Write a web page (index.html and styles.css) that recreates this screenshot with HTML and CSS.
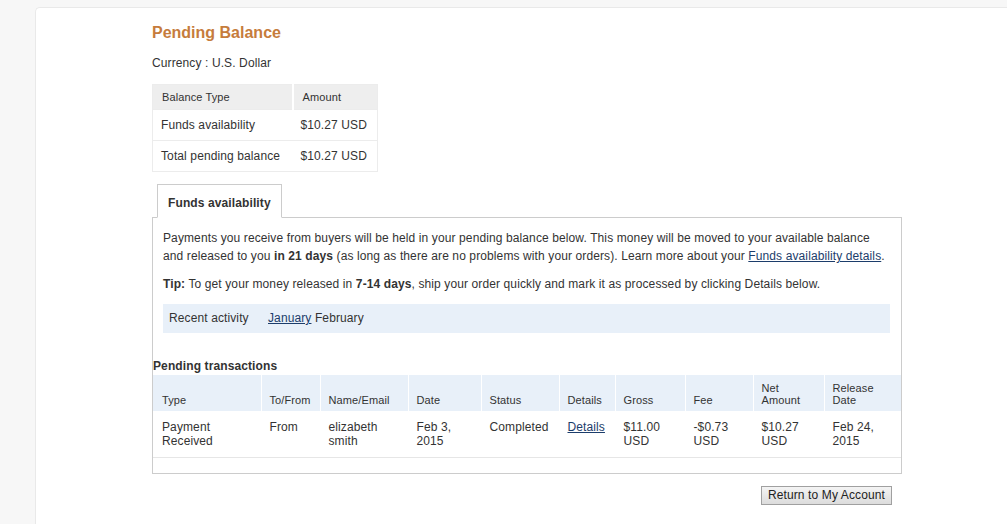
FILE: index.html
```html
<!DOCTYPE html>
<html>
<head>
<meta charset="utf-8">
<link rel="stylesheet" href="styles.css">
</head>
<body>
<div class="card">
  <div class="content">
    <h1 class="title">Pending Balance</h1>
    <p class="currency">Currency : U.S. Dollar</p>
    <table class="balance">
      <thead>
        <tr><th class="bt-type">Balance Type</th><th class="bt-amt">Amount</th></tr>
      </thead>
      <tbody>
        <tr><td>Funds availability</td><td>$10.27 USD</td></tr>
        <tr><td>Total pending balance</td><td>$10.27 USD</td></tr>
      </tbody>
    </table>
    <div class="tabs">
      <div class="tab">Funds availability</div>
    </div>
    <div class="panel">
      <div class="panel-inner">
        <p class="para">Payments you receive from buyers will be held in your pending balance below. This money will be moved to your available balance and released to you <b>in 21 days</b> (as long as there are no problems with your orders). Learn more about your <a href="#" class="link">Funds availability details</a>.</p>
        <p class="para"><b>Tip:</b> To get your money released in <b>7-14 days</b>, ship your order quickly and mark it as processed by clicking Details below.</p>
        <div class="recent"><span class="recent-label">Recent activity</span><a href="#" class="link">January</a> February</div>
      </div>
      <div class="pending-title">Pending transactions</div>
      <table class="tx">
        <colgroup>
          <col class="c1"><col class="c2"><col class="c3"><col class="c4"><col class="c5">
          <col class="c6"><col class="c7"><col class="c8"><col class="c9"><col class="c10">
        </colgroup>
        <thead>
          <tr>
            <th>Type</th><th>To/From</th><th>Name/Email</th><th>Date</th><th>Status</th>
            <th>Details</th><th>Gross</th><th>Fee</th><th>Net<br>Amount</th><th>Release<br>Date</th>
          </tr>
        </thead>
        <tbody>
          <tr>
            <td>Payment<br>Received</td><td>From</td><td>elizabeth<br>smith</td><td>Feb 3,<br>2015</td><td>Completed</td>
            <td><a href="#" class="link">Details</a></td><td>$11.00<br>USD</td><td>-$0.73<br>USD</td><td>$10.27<br>USD</td><td>Feb 24,<br>2015</td>
          </tr>
        </tbody>
      </table>
    </div>
    <div class="actions">
      <button class="btn">Return to My Account</button>
    </div>
  </div>
</div>
</body>
</html>
```
FILE: styles.css
```css
html, body {
  margin: 0;
  padding: 0;
  background: #f7f7f7;
  font-family: "Liberation Sans", Arial, sans-serif;
  color: #333333;
  font-size: 12px;
  letter-spacing: 0.11px;
}
body {
  padding: 7px 0 0 35px;
  overflow: hidden;
  height: 524px;
  box-sizing: border-box;
}
.card {
  background: #ffffff;
  border: 1px solid #e9e9e9;
  border-right: none;
  border-radius: 5px 0 0 0;
  padding: 14px 0 20px 116px;
  min-height: 600px;
}
.content {
  width: 750px;
}
.title {
  margin: 0;
  font-size: 16px;
  line-height: 22px;
  font-weight: bold;
  color: #c67c3c;
  letter-spacing: 0;
}
.currency {
  margin: 11px 0 0 0;
  line-height: 16px;
}
.balance {
  margin-top: 13px;
  border-collapse: collapse;
  border: 1px solid #ececec;
}
.balance th {
  background: #eeeeee;
  font-weight: normal;
  font-size: 11px;
  text-align: left;
  height: 25px;
  padding: 0 9px;
  box-sizing: border-box;
}
.balance th.bt-type {
  border-right: 2px solid #ffffff;
  width: 140px;
}
.balance td {
  height: 30px;
  padding: 0 10px 0 8px;
  border-top: 1px solid #ececec;
  font-size: 12px;
}
.tabs {
  display: flex;
  margin-top: 12px;
  padding-left: 5px;
}
.tab {
  position: relative;
  z-index: 1;
  margin-bottom: -1px;
  background: #ffffff;
  border: 1px solid #cccccc;
  border-bottom: 1px solid #ffffff;
  padding: 0 10px;
  height: 32px;
  line-height: 36px;
  font-weight: bold;
  color: #333333;
}
.panel {
  border: 1px solid #cccccc;
  padding-bottom: 15px;
}
.panel-inner {
  padding: 11px 11px 0 10px;
}
.para {
  margin: 0 0 10px 0;
  line-height: 18px;
}
.link {
  color: #1c3d6b;
  text-decoration: underline;
}
.recent {
  margin-top: 11px;
  background: #e8f0f9;
  height: 29px;
  line-height: 29px;
  padding-left: 6px;
}
.recent-label {
  display: inline-block;
  width: 99px;
}
.pending-title {
  margin-top: 26px;
  font-weight: bold;
  line-height: 14px;
  padding-left: 0;
}
.tx {
  margin-top: 2px;
  width: 100%;
  border-collapse: collapse;
  table-layout: fixed;
}
.c1 { width: 108px; }
.c2 { width: 59px; }
.c3 { width: 88px; }
.c4 { width: 73px; }
.c5 { width: 78px; }
.c6 { width: 56px; }
.c7 { width: 70px; }
.c8 { width: 68px; }
.c9 { width: 71px; }
.c10 { width: auto; }
.tx th {
  background: #e8f0f9;
  font-weight: normal;
  font-size: 11px;
  line-height: 12px;
  text-align: left;
  vertical-align: bottom;
  height: 36px;
  padding: 0 8px 5px 8px;
  box-sizing: border-box;
  border-left: 1px solid #ffffff;
}
.tx th:first-child {
  border-left: none;
  padding-left: 9px;
}
.tx td {
  vertical-align: top;
  line-height: 14px;
  padding: 9px 8px 9px 8px;
  border-bottom: 1px solid #e6e6e6;
  border-left: 1px solid #ffffff;
}
.tx td:first-child {
  border-left: none;
  padding-left: 9px;
}
.actions {
  display: flex;
  justify-content: flex-end;
  padding-right: 10px;
  margin-top: 12px;
}
.btn {
  font-family: "Liberation Sans", Arial, sans-serif;
  font-size: 12px;
  letter-spacing: 0.12px;
  color: #222222;
  height: 19px;
  padding: 0 6px;
  border: 1px solid #a0a0a0;
  background: linear-gradient(#f4f4f4, #dcdcdc);
  border-radius: 0;
  line-height: 17px;
}
```
